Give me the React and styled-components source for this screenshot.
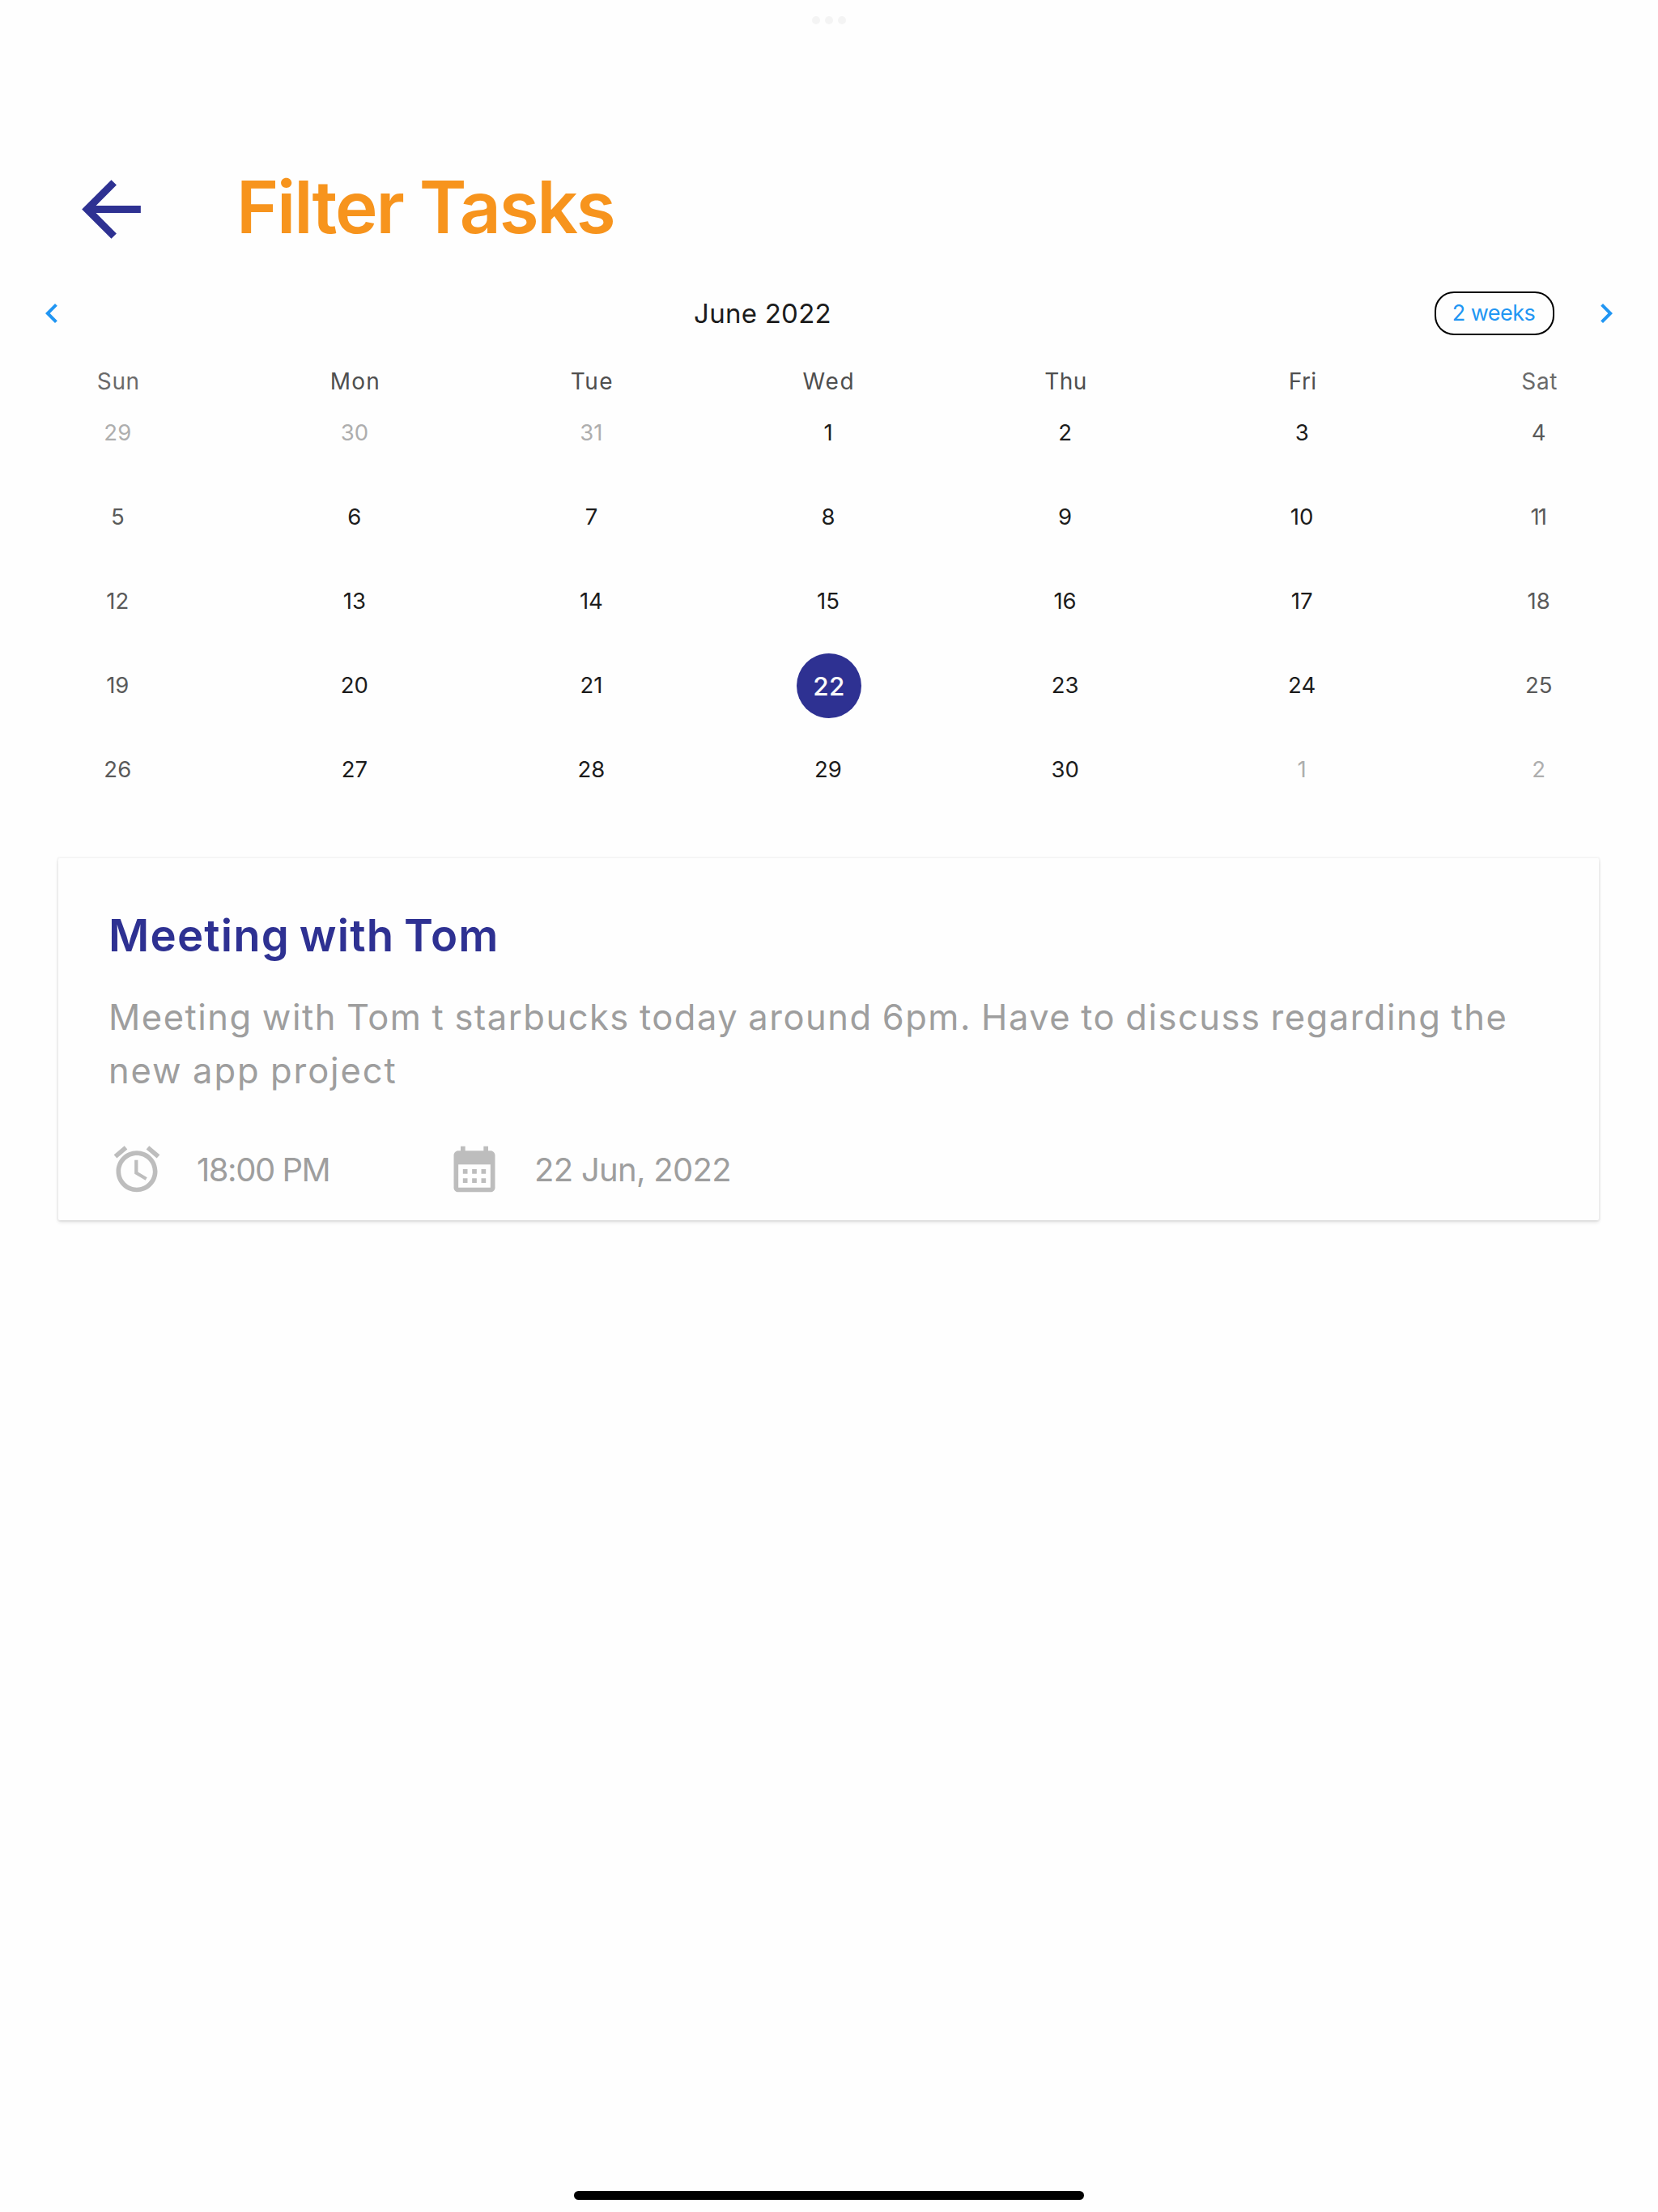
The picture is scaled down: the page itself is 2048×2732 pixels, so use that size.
import React from "react";
import styled, { createGlobalStyle } from "styled-components";

const colors = {
  page: "#fefefe",
  navy: "#2e3192",
  orange: "#f7941d",
  blue: "#2196f3",
  muted: "#9e9e9e",
  icon: "#bdbdbd",
};

const GlobalStyle = createGlobalStyle`
  * { box-sizing: border-box; }
  body {
    margin: 0;
    background: ${colors.page};
    font-family: Inter, "Open Sans", sans-serif;
  }
`;

const Screen = styled.div`
  display: flex;
  flex-direction: column;
  width: 2048px;
  height: 2732px;
  overflow: hidden;
  background: ${colors.page};
`;

const MultitaskBar = styled.div`
  display: flex;
  justify-content: center;
  align-items: center;
  gap: 6px;
  height: 50px;
`;

const Dot = styled.span`
  width: 10px;
  height: 10px;
  border-radius: 50%;
  background: #f4f4f4;
`;

const Header = styled.header`
  display: flex;
  align-items: center;
  margin-top: 154px;
  padding-left: 83px;
  height: 109px;
`;

const Icon = styled.svg`
  display: block;
  flex: none;
  width: ${(p) => p.$size}px;
  height: ${(p) => p.$size}px;
  fill: ${(p) => p.$color};
`;

const PageTitle = styled.h1`
  margin: 0 0 5px 100px;
  font-size: 89px;
  font-weight: 560;
  line-height: 100px;
  letter-spacing: -2.2px;
  color: ${colors.orange};
`;

const CalendarHeader = styled.div`
  display: flex;
  align-items: center;
  height: 54px;
  margin-top: 47px;
  padding: 0 40px;
`;

const MonthLabel = styled.div`
  flex: 1;
  margin-left: 24px;
  text-align: center;
  font-size: 33px;
  line-height: 54px;
  letter-spacing: 0.25px;
  color: #1c1c1c;
`;

const FormatButton = styled.button`
  width: 148px;
  height: 54px;
  margin-right: 40px;
  padding: 0 2px 0 0;
  border: 2px solid #000;
  border-radius: 24px;
  background: transparent;
  font: 400 27px/50px Inter, sans-serif;
  letter-spacing: -0.53px;
  color: ${colors.blue};
`;

const Weekdays = styled.div`
  display: grid;
  grid-template-columns: repeat(7, 1fr);
  margin-top: 46px;
`;

const Weekday = styled.div`
  text-align: center;
  font-size: 28px;
  line-height: 22px;
  letter-spacing: ${(p) => p.$spacing}px;
  color: ${(p) => (p.$weekend ? "#6a6a6a" : "#4f4f4f")};
`;

const Days = styled.div`
  display: grid;
  grid-template-columns: repeat(7, 1fr);
  grid-auto-rows: 104px;
`;

const Day = styled.div`
  display: flex;
  align-items: center;
  justify-content: center;
  padding-right: ${(p) => (p.$tight ? 4 : 2)}px;
  font-size: 27.5px;
  line-height: 34px;
  letter-spacing: ${(p) => (p.$tight ? "-2px" : "0")};
  color: ${(p) => (p.$outside ? "#aeaeae" : p.$weekend ? "#5a5a5a" : "#1c1c1c")};
`;

const SelectedDay = styled.span`
  width: 80px;
  height: 80px;
  margin: 2px -2px 0 0;
  border-radius: 50%;
  background: ${colors.navy};
  text-align: center;
  font-size: 31.5px;
  font-weight: 450;
  line-height: 81px;
  letter-spacing: 0.2px;
  color: #fafafa;
`;

const Card = styled.article`
  height: 447px;
  margin: 58px 73px 0 72px;
  padding: 55px 62px 0;
  border-radius: 2px;
  background: ${colors.page};
  box-shadow: 0 0 0 2px rgba(0, 0, 0, 0.03), 0 3px 4px rgba(0, 0, 0, 0.1);
`;

const CardTitle = styled.h2`
  margin: 0 0 28px;
  font-size: 54.5px;
  font-weight: 560;
  line-height: 80px;
  letter-spacing: 1.2px;
  word-spacing: -3.2px;
  color: ${colors.navy};
`;

const Description = styled.p`
  margin: 0 0 55px;
  font-size: 43.5px;
  line-height: 66px;
  white-space: nowrap;
  color: ${colors.muted};
`;

const Line = styled.span`
  display: block;
  letter-spacing: ${(p) => p.$spacing}px;
  word-spacing: -1.6px;
`;

const Meta = styled.div`
  display: flex;
  padding-left: 1px;
`;

const MetaItem = styled.div`
  display: flex;
  align-items: center;
  gap: 40px;
  width: 417px;
  font-size: 40px;
  letter-spacing: ${(p) => p.$spacing}px;
  white-space: nowrap;
  color: ${colors.muted};
`;

const HomeIndicator = styled.div`
  width: 630px;
  height: 11px;
  margin: auto auto 15px;
  border-radius: 6px;
  background: #000;
`;

const paths = {
  back: "M20 11H7.83l5.59-5.59L12 4l-8 8 8 8 1.41-1.41L7.83 13H20v-2z",
  prev: "M15.41 7.41L14 6l-6 6 6 6 1.41-1.41L10.83 12z",
  next: "M10 6L8.59 7.41 13.17 12l-4.58 4.59L10 18l6-6z",
  alarm:
    "M22 5.72l-4.6-3.86-1.29 1.53 4.6 3.86L22 5.72zM7.88 3.39L6.6 1.86 2 5.71l1.29 1.53 4.59-3.85zM12.5 8H11v6l4.75 2.85.75-1.23-4-2.37V8zM12 4c-4.97 0-9 4.03-9 9s4.02 9 9 9c4.97 0 9-4.03 9-9s-4.03-9-9-9zm0 16c-3.87 0-7-3.13-7-7s3.13-7 7-7 7 3.13 7 7-3.13 7-7 7z",
  calendar:
    "M19 4h-1V2h-2v2H8V2H6v2H5c-1.11 0-1.99.9-1.99 2L3 20c0 1.1.89 2 2 2h14c1.1 0 2-.9 2-2V6c0-1.1-.9-2-2-2zm0 16H5V10h14v10zM9 14H7v-2h2v2zm4 0h-2v-2h2v2zm4 0h-2v-2h2v2zm-8 4H7v-2h2v2zm4 0h-2v-2h2v2zm4 0h-2v-2h2v2z",
};

function Glyph({ name, size, color }) {
  return (
    <Icon viewBox="0 0 24 24" $size={size} $color={color} aria-hidden="true">
      <path d={paths[name]} />
    </Icon>
  );
}

const weekdays = [
  ["Sun", 0.6],
  ["Mon", 1.2],
  ["Tue", 1.5],
  ["Wed", 1.8],
  ["Thu", 0.5],
  ["Fri", 0.4],
  ["Sat", 0.7],
];

// The grid opens on Sunday 29 May and closes on Saturday 2 July.
const days = Array.from({ length: 35 }, (_, i) => {
  const n = i - 2;
  const outside = n < 1 || n > 30;
  const label = n < 1 ? n + 31 : n > 30 ? n - 30 : n;
  return { label, outside, weekend: i % 7 === 0 || i % 7 === 6, selected: n === 22 };
});

export default function App() {
  return (
    <Screen>
      <GlobalStyle />
      <MultitaskBar>
        <Dot />
        <Dot />
        <Dot />
      </MultitaskBar>

      <Header>
        <Glyph name="back" size={109} color={colors.navy} />
        <PageTitle>Filter Tasks</PageTitle>
      </Header>

      <CalendarHeader>
        <Glyph name="prev" size={48} color={colors.blue} />
        <MonthLabel>June 2022</MonthLabel>
        <FormatButton>2 weeks</FormatButton>
        <Glyph name="next" size={48} color={colors.blue} />
      </CalendarHeader>

      <Weekdays>
        {weekdays.map(([name, spacing], i) => (
          <Weekday key={name} $spacing={spacing} $weekend={i === 0 || i === 6}>
            {name}
          </Weekday>
        ))}
      </Weekdays>
      <Days>
        {days.map((d, i) => (
          <Day key={i} $outside={d.outside} $weekend={d.weekend} $tight={d.label === 11}>
            {d.selected ? <SelectedDay>{d.label}</SelectedDay> : d.label}
          </Day>
        ))}
      </Days>

      <Card>
        <CardTitle>Meeting with Tom</CardTitle>
        <Description>
          <Line $spacing={1.5}>
            Meeting with Tom t starbucks today around 6pm. Have to discuss regarding the
          </Line>
          <Line $spacing={1.9}>new app project</Line>
        </Description>
        <Meta>
          <MetaItem $spacing={-1.46}>
            <Glyph name="alarm" size={68} color={colors.icon} />
            18:00 PM
          </MetaItem>
          <MetaItem $spacing={-0.7}>
            <Glyph name="calendar" size={68} color={colors.icon} />
            22 Jun, 2022
          </MetaItem>
        </Meta>
      </Card>

      <HomeIndicator />
    </Screen>
  );
}
